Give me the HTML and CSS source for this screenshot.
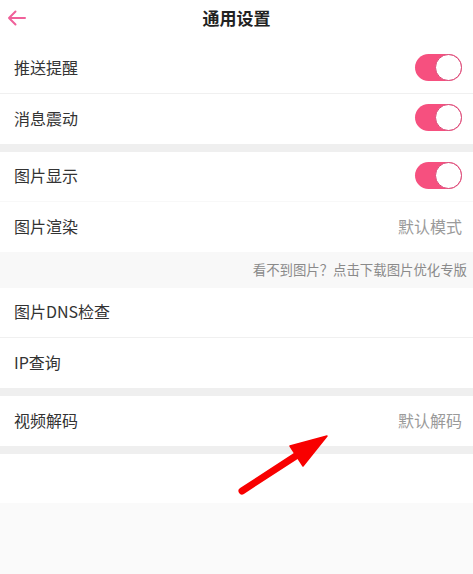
FILE: index.html
```html
<!DOCTYPE html>
<html lang="zh-CN">
<head>
<meta charset="utf-8">
<title>通用设置</title>
<link rel="stylesheet" href="styles.css">
</head>
<body>
<div class="page">
  <header class="header">
    <svg class="back" width="20" height="16" viewBox="0 0 20 16">
      <path d="M18 8H2M8.5 1.5L2 8l6.5 6.5" fill="none" stroke="#f0609a" stroke-width="2" stroke-linecap="round" stroke-linejoin="round"/>
    </svg>
    <h1 class="title">通用设置</h1>
  </header>

  <section class="group">
    <div class="row"><span class="label">推送提醒</span><span class="toggle"><span class="knob"></span></span></div>
    <div class="row"><span class="label">消息震动</span><span class="toggle"><span class="knob"></span></span></div>
  </section>
  <div class="gap"></div>
  <section class="group">
    <div class="row faint"><span class="label">图片显示</span><span class="toggle"><span class="knob"></span></span></div>
    <div class="row"><span class="label">图片渲染</span><span class="value">默认模式</span></div>
  </section>
  <div class="hint">看不到图片？点击下载图片优化专版</div>
  <section class="group">
    <div class="row"><span class="label">图片DNS检查</span></div>
    <div class="row"><span class="label">IP查询</span></div>
  </section>
  <div class="gap"></div>
  <section class="group">
    <div class="row"><span class="label">视频解码</span><span class="value">默认解码</span></div>
  </section>
  <div class="gap"></div>
  <div class="blank"></div>
  <div class="footer"></div>

  <svg class="pointer" width="473" height="574" viewBox="0 0 473 574">
    <line x1="242" y1="491" x2="305" y2="450" stroke="#f80000" stroke-width="7" stroke-linecap="round"/>
    <polygon points="327,436 290,446 303,466" fill="#f80000" stroke="#f80000" stroke-width="1.5" stroke-linejoin="round"/>
  </svg>
</div>
</body>
</html>
```

FILE: styles.css
```css
* { box-sizing: border-box; }
html, body { margin: 0; padding: 0; }
body {
  background: #fafafa;
  font-family: "Noto Sans CJK SC", "Noto Sans", sans-serif;
  color: #333;
}
.page {
  position: relative;
  width: 473px;
  min-height: 574px;
  background: #fafafa;
  overflow: hidden;
}
.header {
  position: relative;
  height: 44px;
  background: #fff;
  display: flex;
  justify-content: center;
}
.back {
  position: absolute;
  left: 7px;
  top: 10px;
}
.title {
  margin: 0;
  font-size: 17px;
  font-weight: bold;
  line-height: 36px;
  color: #222;
}
.group { background: #fff; }
.row {
  height: 50px;
  display: flex;
  align-items: center;
  justify-content: space-between;
  padding: 0 11px 3px 14px;
  border-bottom: 1px solid #f0f0f0;
}
.row:last-child { border-bottom: none; }
.row.faint { border-bottom-color: #f8f8f8; }
.label {
  font-size: 16px;
  color: #333;
}
.value {
  font-size: 16px;
  color: #9a9a9a;
}
.toggle {
  width: 47px;
  height: 27px;
  border-radius: 14px;
  background: #f6507f;
  position: relative;
}
.knob {
  position: absolute;
  right: 0;
  top: 0;
  width: 27px;
  height: 27px;
  border-radius: 50%;
  background: #fff;
  border: 1.5px solid #d84a78;
}
.gap {
  height: 8px;
  background: #efefef;
}
.hint {
  height: 36px;
  background: #f8f8f8;
  font-size: 13.4px;
  color: #8a8a8a;
  display: flex;
  align-items: center;
  justify-content: flex-end;
  padding: 0 6px 2px 0;
}
.blank {
  height: 49px;
  background: #fff;
}
.footer {
  height: 71px;
  background: #fafafa;
}
.pointer {
  position: absolute;
  left: 0;
  top: 0;
  pointer-events: none;
}
```
